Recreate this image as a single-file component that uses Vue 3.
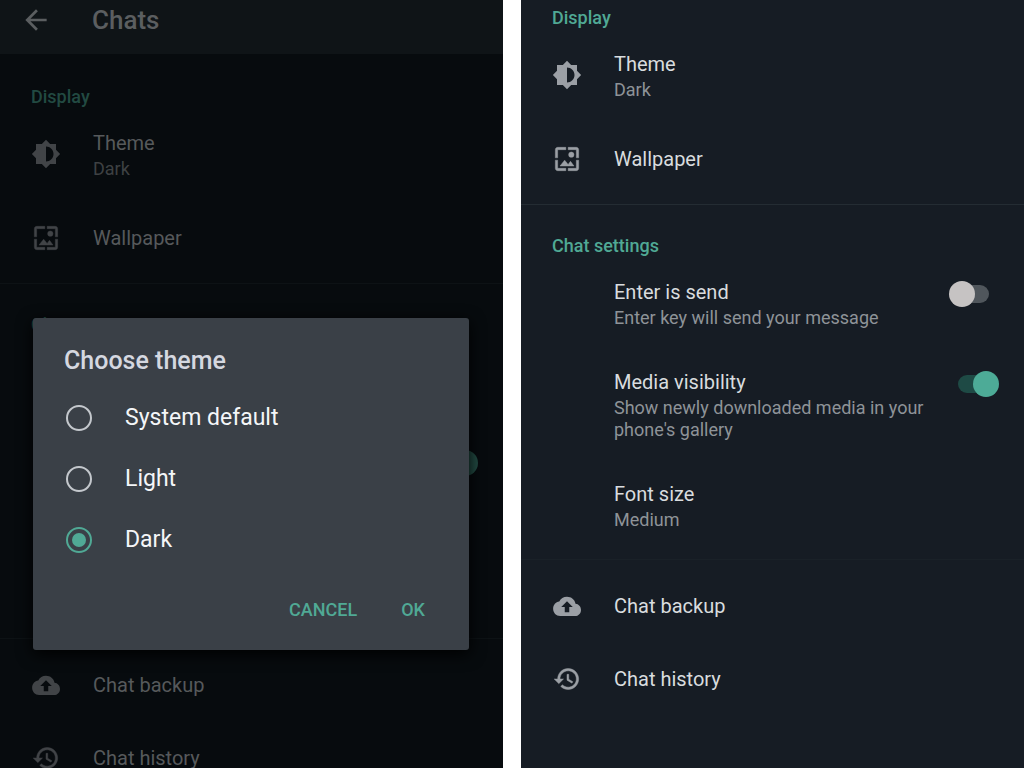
<script setup>
import { ref } from 'vue'

const theme = ref('dark')
const themes = [
  { id: 'system', label: 'System default' },
  { id: 'light', label: 'Light' },
  { id: 'dark', label: 'Dark' },
]

const sections = [
  {
    title: 'Display',
    rows: [
      { icon: 'theme', label: 'Theme', detail: 'Dark' },
      { icon: 'wallpaper', label: 'Wallpaper' },
    ],
  },
  {
    title: 'Chat settings',
    rows: [
      { label: 'Enter is send', detail: 'Enter key will send your message', toggle: 'off' },
      { label: 'Media visibility', detail: "Show newly downloaded media in your phone's gallery", toggle: 'on' },
      { label: 'Font size', detail: 'Medium' },
    ],
  },
  {
    rows: [
      { icon: 'backup', label: 'Chat backup' },
      { icon: 'history', label: 'Chat history' },
    ],
  },
]

const panels = ['behind', 'front']
</script>

<template>
  <main class="screens">
    <div v-for="panel in panels" :key="panel" class="screen" :class="panel">
      <header v-if="panel === 'behind'" class="bar">
        <button class="back" type="button" aria-label="Back">
          <svg viewBox="0 0 24 24"><path d="M20 11H7.83l5.59-5.59L12 4l-8 8 8 8 1.41-1.41L7.83 13H20v-2z" /></svg>
        </button>
        <h1>Chats</h1>
      </header>

      <section v-for="(section, s) in sections" :key="s" class="section">
        <h2 v-if="section.title">{{ section.title }}</h2>
        <component
          :is="row.toggle ? 'label' : 'button'"
          v-for="row in section.rows"
          :key="row.label"
          :type="row.toggle ? undefined : 'button'"
          class="row"
          :class="{ iconic: row.icon, single: !row.detail }"
        >
          <span class="icon">
            <svg v-if="row.icon === 'theme'" viewBox="0 0 24 24">
              <path d="M20 15.31L23.31 12 20 8.69V4h-4.69L12 .69 8.69 4H4v4.69L.69 12 4 15.31V20h4.69L12 23.31 15.31 20H20v-4.69zM12 18V6c3.31 0 6 2.69 6 6s-2.69 6-6 6z" />
            </svg>
            <svg v-else-if="row.icon === 'wallpaper'" class="outlined" viewBox="0 0 24 24">
              <path d="M4 4h7V2H4c-1.1 0-2 .9-2 2v7h2V4zm6 9l-4 5h12l-3-4-2.03 2.71L10 13zM20 2h-7v2h7v7h2V4c0-1.1-.9-2-2-2zm0 18h-7v2h7c1.1 0 2-.9 2-2v-7h-2v7zM4 13H2v7c0 1.1.9 2 2 2h7v-2H4v-7z" />
              <circle cx="15.7" cy="8.3" r="2.3" />
            </svg>
            <svg v-else-if="row.icon === 'backup'" viewBox="0 0 24 24">
              <path d="M18.8 10.2C18.2 6.8 15.4 4.6 12 4.6c-2.8 0-5.1 1.500-6.2 3.800C3 8.700.9 11.200.9 14.200.9 17.400 3.300 20 6.500 20h12c2.600 0 4.700-2.200 4.700-4.900 0-2.600-1.900-4.700-4.400-4.900zM13.800 12.700v4.200h-3.600v-4.200H7.400L12 8.100l4.600 4.600h-2.800z" />
            </svg>
            <svg v-else-if="row.icon === 'history'" class="outlined" viewBox="0 0 24 24">
              <path d="M13 3c-4.970 0-9 4.030-9 9H1l3.890 3.890.07.14L9 12H6c0-3.870 3.130-7 7-7s7 3.130 7 7-3.130 7-7 7c-1.930 0-3.680-.79-4.940-2.060l-1.420 1.420C8.270 19.990 10.510 21 13 21c4.970 0 9-4.030 9-9s-4.030-9-9-9zm-1 5v5l4.280 2.540.72-1.210-3.500-2.080V8H12z" />
            </svg>
          </span>
          <span class="text">
            <span class="name">{{ row.label }}</span>
            <span v-if="row.detail" class="detail">{{ row.detail }}</span>
          </span>
          <span v-if="row.toggle" class="switch" :class="row.toggle">
            <input type="checkbox" :checked="row.toggle === 'on'" />
          </span>
        </component>
      </section>

      <div v-if="panel === 'behind'" class="scrim">
        <form class="dialog" role="dialog" aria-labelledby="dialog-title" @submit.prevent>
          <h2 id="dialog-title">Choose theme</h2>
          <label v-for="option in themes" :key="option.id" class="option">
            <input v-model="theme" type="radio" name="theme" :value="option.id" />
            <span>{{ option.label }}</span>
          </label>
          <div class="actions">
            <button type="button">CANCEL</button>
            <button type="submit">OK</button>
          </div>
        </form>
      </div>
    </div>
  </main>
</template>

<style>
body {
  background: #fff;
}
</style>

<style scoped>
.screens {
  display: grid;
  grid-template-columns: 1fr 1fr;
  gap: 18px;
  height: 100vh;
  overflow: hidden;
  font-family: Roboto, "Liberation Sans", sans-serif;
}
.screen {
  position: relative;
  overflow: hidden;
  background: #161c24;
  --accent: #50a995;
  --name: #d9dcdf;
  --detail: #8e9398;
  --glyph: #9b9fa5;
  --line: #242c33;
}
.behind {
  background: #070b0e;
  --accent: #224a42;
  --name: #56595b;
  --detail: #3e4143;
  --glyph: #414447;
  --line: #0d1215;
}
h1,
h2 {
  margin: 0;
  font-weight: 500;
}
button {
  border: 0;
  padding: 0;
  background: none;
  font: inherit;
  text-align: left;
}
svg {
  display: block;
  width: 30px;
  height: 30px;
  fill: var(--glyph);
}
.outlined {
  width: 28px;
  height: 28px;
  stroke: var(--glyph);
  stroke-width: 0.4;
}
.bar {
  display: flex;
  align-items: center;
  height: 54px;
  box-sizing: border-box;
  padding: 0 20px 14px;
  gap: 40px;
  background: #0f1417;
}
.back svg {
  width: 32px;
  height: 32px;
  fill: #5b5e60;
}
.bar h1 {
  font-size: 26px;
  line-height: 32px;
  color: #5b5e60;
}
.section {
  padding: 31px 0 9px;
  border-bottom: 1px solid var(--line);
}
.section:first-child {
  padding-top: 8px;
}
.bar + .section {
  padding-top: 33px;
}
.section:nth-last-of-type(2) {
  border-bottom-color: #1a2128;
}
.behind .section:nth-last-of-type(2) {
  border-bottom-color: var(--line);
}
.section:last-of-type {
  padding-top: 9px;
  border-bottom: 0;
}
.section h2 {
  padding: 0 31px 2px;
  font-size: 18px;
  line-height: 20px;
  color: var(--accent);
}
.row {
  display: flex;
  align-items: center;
  width: 100%;
  min-height: 73px;
  box-sizing: border-box;
  padding: 19px 25px 19px 31px;
}
.iconic {
  padding-bottom: 21px;
}
.single {
  padding-top: 0;
  padding-bottom: 0;
}
.icon {
  display: flex;
  justify-content: center;
  width: 30px;
  flex: none;
  margin-right: 32px;
}
.text {
  flex: 1;
}
.name,
.detail {
  display: block;
}
.name {
  font-size: 20px;
  line-height: 30px;
  color: var(--name);
}
.detail {
  font-size: 18px;
  line-height: 22px;
  color: var(--detail);
}
.switch {
  width: 56px;
  height: 26px;
  flex: none;
  align-self: flex-start;
  margin-top: 4px;
}
.switch input {
  appearance: none;
  display: flex;
  align-items: center;
  width: 34px;
  height: 18px;
  margin: 4px 0 0 12px;
  border-radius: 9px;
  background: #50565c;
}
.switch input::before {
  content: "";
  flex: none;
  width: 26px;
  height: 26px;
  margin-left: -6px;
  border-radius: 50%;
  background: #c6c3c3;
}
.switch.on input {
  margin-left: 15px;
  background: #1e4a45;
}
.switch.on input::before {
  margin-left: 15px;
  background: #4dab97;
}
.behind .switch.on input {
  background: #0d201e;
}
.behind .switch.on input::before {
  background: #224a42;
}
.behind .switch.off input,
.behind .switch.off input::before {
  background: #2e3133;
}
.scrim {
  position: absolute;
  inset: 0;
  display: flex;
  align-items: center;
  padding: 200px 34px 0 33px;
}
.dialog {
  flex: 1;
  box-sizing: border-box;
  padding: 27px 31px 24px;
  border-radius: 3px;
  background: #3a4047;
  box-shadow: 0 4px 16px #000;
}
.dialog h2 {
  padding-bottom: 10px;
  font-size: 25px;
  line-height: 32px;
  color: #d5d8e0;
}
.option {
  display: flex;
  align-items: center;
  gap: 33px;
  height: 61px;
  font-size: 23px;
  color: #f4f6f8;
}
.option input {
  appearance: none;
  display: grid;
  place-items: center;
  width: 26px;
  height: 26px;
  box-sizing: border-box;
  margin: 0 0 0 2px;
  border: 2px solid #c4c8cd;
  border-radius: 50%;
}
.option input:checked {
  border-color: #50a995;
}
.option input:checked::before {
  content: "";
  width: 14px;
  height: 14px;
  border-radius: 50%;
  background: #50a995;
}
.actions {
  display: flex;
  justify-content: flex-end;
  gap: 44px;
  padding: 24px 13px 0 0;
}
.actions button {
  font-size: 18px;
  font-weight: 500;
  line-height: 32px;
  color: #50a995;
}
</style>
